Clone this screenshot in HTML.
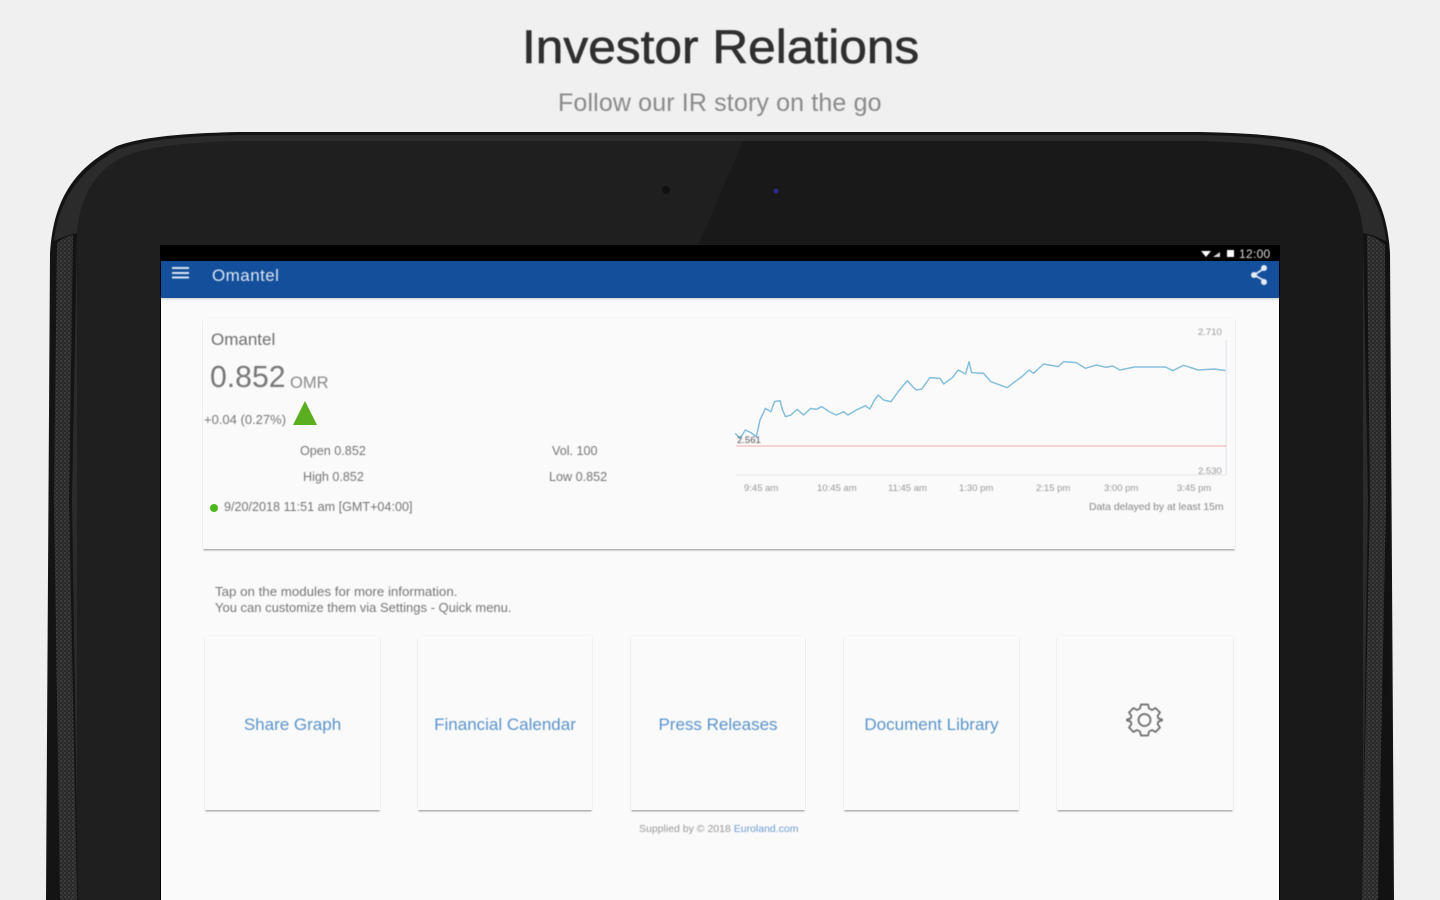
<!DOCTYPE html>
<html><head><meta charset="utf-8"><title>Investor Relations</title>
<style>
html,body{margin:0;padding:0;width:1440px;height:900px;overflow:hidden;background:#f0f0f0}
body{position:relative;font-family:"Liberation Sans",sans-serif}
.t{position:absolute;white-space:nowrap;line-height:1;transform-origin:0 0}
.b{filter:blur(.55px)}
.card{position:absolute;background:#fafafa;box-shadow:0 2px 1.500px -.5px rgba(0,0,0,.3),0 0 2px rgba(0,0,0,.05)}
.lbl{position:absolute;top:716px;font-size:17px;line-height:17px;color:#5b93cb;text-align:center;white-space:nowrap;filter:blur(.5px)}
svg{position:absolute;left:0;top:0}
.s{font-size:12.600px;color:#767676}
.a{font-size:9.500px;color:#999;top:484px}
</style></head>
<body>
<div class="t" style="left:522px;top:23px;font-size:47px;transform:scaleX(1.056);color:#2f2f2f;-webkit-text-stroke:.6px #2f2f2f;filter:blur(.45px)">Investor Relations</div>
<div class="t b" style="left:558px;top:91px;font-size:25px;letter-spacing:.14px;color:#8a8a8a">Follow our IR story on the go</div>

<svg width="1440" height="900" viewBox="0 0 1440 900">
<defs>
<pattern id="dots" width="4" height="4" patternUnits="userSpaceOnUse">
<rect width="4" height="4" fill="#292929"/><circle cx="1" cy="1" r="1" fill="#424242"/><circle cx="3" cy="3" r="1" fill="#383838"/>
</pattern>
</defs>
<path d="M46 900 L50 253 C53 205 70 170 117 146 C145 136 190 133 240 132 L1200 132 C1250 133 1295 136 1323 146 C1370 170 1387 205 1390 253 L1394 900Z" fill="#141414"/>
<path d="M50 900 L53 250 C56 207 73 174 119 149 C147 139 190 136 240 135 L1200 135 C1250 136 1293 139 1321 149 C1367 174 1384 207 1387 250 L1390 900Z" fill="#2b2b2b"/>
<path d="M77 900 L77 233 C79 205 90 180 110 165 C130 150 165 143 240 141 L1200 141 C1275 143 1310 150 1330 165 C1350 180 1361 205 1363 233 L1363 900Z" fill="#191919"/>
<path d="M77 900 L77 233 C79 205 90 180 110 165 C130 150 165 143 240 141 L743 141 L698 246 L161 246 L161 900Z" fill="#1f1f1f"/>
<path d="M48 900 L51 243 Q62 236 77 233 L72 500 L78 900Z" fill="#141414"/>
<path d="M1392 900 L1389 243 Q1378 236 1363 233 L1368 500 L1362 900Z" fill="#121212"/>
<path d="M60 900 L54 500 L57 243 Q64 237 73 235 L69 500 L77 900Z" fill="url(#dots)"/>
<path d="M1378 900 L1386 500 L1385 245 Q1376 237 1367 235 L1370 500 L1362 900Z" fill="url(#dots)"/>
<circle cx="666" cy="190" r="4" fill="#111"/>
<circle cx="776" cy="191" r="2.500" fill="#2c2a8c"/>
</svg>

<div style="position:absolute;left:161px;top:246px;width:1118px;height:654px;background:#fafafa;box-shadow:0 0 0 1px #000"></div>
<div style="position:absolute;left:161px;top:246px;width:1118px;height:15px;background:#000"></div>
<div style="position:absolute;left:161px;top:261px;width:1118px;height:37px;background:#134f9a;box-shadow:0 1px 2px rgba(0,0,0,.2)"></div>

<svg width="1440" height="900" viewBox="0 0 1440 900" style="filter:blur(.4px)">
<path d="M172 268h17M172 273h17M172 277.500h17" stroke="#dbe6f3" stroke-width="2"/>
<path d="M1201 251h10l-5 6z" fill="#fff"/><path d="M1213 257l7-5v5z" fill="#ddd"/>
<rect x="1227" y="250" width="7" height="7" fill="#fff"/>
<path d="M1265 268L1254 275L1265 281" fill="none" stroke="#dfe9f5" stroke-width="1.800"/>
<circle cx="1264" cy="268" r="3" fill="#e6eef7"/><circle cx="1254" cy="275" r="3" fill="#e6eef7"/><circle cx="1264" cy="282" r="3" fill="#e6eef7"/>
</svg>
<div class="t" style="left:1239px;top:248px;font-size:12px;letter-spacing:.3px;color:#ddd;filter:blur(.4px)">12:00</div>
<div class="t b" style="left:212px;top:267px;font-size:17px;letter-spacing:.45px;color:#dce7f4">Omantel</div>

<div class="card" style="left:203px;top:318px;width:1032px;height:231px"></div>
<div class="t b" style="left:211px;top:331px;font-size:17px;color:#6f6f6f">Omantel</div>
<div class="t" style="left:210px;top:363px;font-size:30.200px;color:#777;filter:blur(.4px)">0.852</div>
<div class="t b" style="left:290px;top:375px;font-size:16.500px;color:#8a8a8a">OMR</div>
<div class="t b s" style="left:204px;top:413px;font-size:13px">+0.04 (0.27%)</div>
<svg width="1440" height="900" viewBox="0 0 1440 900"><path d="M305 401L317 425H293Z" fill="#5aae1f"/></svg>
<div class="t b s" style="left:300px;top:445px">Open 0.852</div>
<div class="t b s" style="left:303px;top:471px;font-size:12.600px">High 0.852</div>
<div class="t b s" style="left:552px;top:445px">Vol. 100</div>
<div class="t b s" style="left:549px;top:471px">Low 0.852</div>
<div style="position:absolute;left:210px;top:504px;width:8px;height:8px;border-radius:50%;background:#4cb81a"></div>
<div class="t b s" style="left:224px;top:501px">9/20/2018 11:51 am [GMT+04:00]</div>

<svg width="1440" height="900" viewBox="0 0 1440 900">
<g transform="translate(720 240) scale(.36364 .33333)" fill="none">
<path d="M1392 300V705" stroke="#dfe3ee" stroke-width="1" vector-effect="non-scaling-stroke"/>
<path d="M45 705H1392" stroke="#e8e8e8" stroke-width="1" vector-effect="non-scaling-stroke"/>
<path d="M45 618H1392" stroke="#f2c6c4" stroke-width="1.500" vector-effect="non-scaling-stroke"/>
<polyline stroke="#86bfdc" stroke-width="1.500" vector-effect="non-scaling-stroke" stroke-linejoin="round" points="42,580 55,595 70,570 85,578 100,590 110,540 125,505 132,510 140,515 150,485 165,482 172,510 180,530 195,525 212,508 230,525 250,505 265,508 280,500 300,515 320,525 340,515 352,525 375,510 400,497 412,507 425,480 435,465 450,480 470,485 490,455 515,422 530,440 540,450 555,447 577,413 605,415 615,432 640,412 655,390 675,402 685,365 692,398 725,400 745,425 790,443 805,430 830,410 850,390 862,400 890,372 930,380 945,365 980,368 1005,385 1035,375 1060,382 1080,378 1100,390 1140,381 1225,381 1245,392 1275,376 1315,390 1360,387 1390,392"/>
</g>
</svg>
<div class="t b" style="left:737px;top:436px;font-size:9.500px;color:#555">2.561</div>
<div class="t b" style="left:1198px;top:328px;font-size:9.500px;color:#999">2.710</div>
<div class="t b" style="left:1198px;top:467px;font-size:9.500px;color:#999">2.530</div>
<div class="t b a" style="left:744px">9:45 am</div>
<div class="t b a" style="left:817px">10:45 am</div>
<div class="t b a" style="left:888px">11:45 am</div>
<div class="t b a" style="left:959px">1:30 pm</div>
<div class="t b a" style="left:1036px">2:15 pm</div>
<div class="t b a" style="left:1104px">3:00 pm</div>
<div class="t b a" style="left:1177px">3:45 pm</div>
<div class="t b" style="left:1089px;top:503px;font-size:10.400px;color:#888">Data delayed by at least 15m</div>

<div class="t b" style="left:215px;top:585px;font-size:13.300px;color:#767676">Tap on the modules for more information.</div>
<div class="t b" style="left:215px;top:601px;font-size:13px;color:#767676">You can customize them via Settings - Quick menu.</div>

<div class="card" style="left:205px;top:636px;width:175px;height:174px"></div>
<div class="card" style="left:418px;top:636px;width:174px;height:174px"></div>
<div class="card" style="left:631px;top:636px;width:174px;height:174px"></div>
<div class="card" style="left:844px;top:636px;width:175px;height:174px"></div>
<div class="card" style="left:1057px;top:636px;width:176px;height:174px"></div>
<div class="lbl" style="left:205px;width:175px">Share Graph</div>
<div class="lbl" style="left:418px;width:174px">Financial Calendar</div>
<div class="lbl" style="left:631px;width:174px">Press Releases</div>
<div class="lbl" style="left:844px;width:175px">Document Library</div>
<svg width="1440" height="900" viewBox="0 0 1440 900" style="filter:blur(.4px)">
<g transform="translate(1144.500 720)" fill="none" stroke="#6a6a6a" stroke-width="1.700">
<circle r="6"/>
<path d="M-3.500-15.500H3.500L4.500-11.500L7.500-10L11-12L15.500-7.500L13-4L14-1.500L17.500-.5V.5L14 1.500L13 4L15.500 7.500L11 12L7.500 10L4.500 11.500L3.500 15.500H-3.500L-4.500 11.500L-7.500 10L-11 12L-15.500 7.500L-13 4L-14 1.500L-17.500 .5V-.5L-14-1.500L-13-4L-15.500-7.500L-11-12L-7.500-10L-4.500-11.500Z" stroke-linejoin="round"/>
</g>
</svg>
<div class="t b" style="left:639px;top:824px;font-size:10.500px;color:#999">Supplied by © 2018 <span style="color:#6d9fd1">Euroland.com</span></div>
</body></html>
